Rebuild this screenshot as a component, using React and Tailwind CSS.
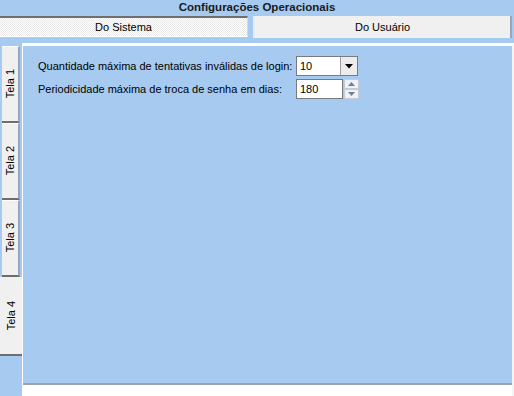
export default function App() {
  const font = { fontFamily: '"Liberation Sans", Arial, sans-serif' };
  return (
    <div
      className="w-[514px] h-[396px] bg-[#a6caf0] text-[11px] text-black flex flex-col overflow-hidden"
      style={font}
    >
      {/* Title */}
      <div className="h-[16px] flex items-center justify-center font-bold text-[11.5px] text-[#1a1a1a]">
        Configurações Operacionais
      </div>

      {/* Top tabs */}
      <div className="h-[23px] flex">
        <div className="w-[248px] h-[21px] border-t-2 border-[#6e6e6e] border-b border-b-white border-r border-r-[#d8d8d8] bg-[#f6f6f6] bg-[repeating-conic-gradient(#ffffff_0_25%,#e9e9e9_0_50%)] bg-[length:2px_2px] flex items-center justify-center">
          Do Sistema
        </div>
        <div className="w-[5px]" />
        <div className="w-[259px] h-[22px] bg-[#f0f0f0] border-l-2 border-l-[#e6ecf4] border-r-2 border-r-[#9aa6b8] flex items-center justify-center">
          Do Usuário
        </div>
      </div>

      {/* Body */}
      <div className="mt-[4px] flex flex-1">
        {/* Left vertical tabs */}
        <div className="w-[22px] flex flex-col pt-[3px]">
          {["Tela 1", "Tela 2", "Tela 3"].map((t) => (
            <div
              key={t}
              className="ml-[2px] w-[18px] h-[77px] bg-[#f0f0f0] border-t border-t-white border-b-2 border-b-[#6e6e6e] border-r-2 border-r-[#9aa6b8] flex items-center justify-center"
            >
              <span className="[writing-mode:vertical-rl] rotate-180 whitespace-nowrap">{t}</span>
            </div>
          ))}
          <div className="w-[22px] h-[79px] bg-[#f0f0f0] border-b-2 border-b-[#6e6e6e] flex items-center justify-center">
            <span className="[writing-mode:vertical-rl] rotate-180 whitespace-nowrap">Tela 4</span>
          </div>
        </div>

        {/* Content */}
        <div className="flex-1 flex flex-col">
          <div className="flex-1 border-t-[3px] border-t-white border-l border-l-white border-r-2 border-r-[#f4f4f4] flex flex-col">
            <div className="flex-1 bg-[#a6caf0] border-b-2 border-b-[#9aa3ad] pl-[15px] pt-[10px] flex flex-col gap-[3px]">
              <div className="flex items-center h-[20px]">
                <span className="w-[258px] whitespace-nowrap">
                  Quantidade máxima de tentativas inválidas de login:
                </span>
                <div className="w-[62px] h-[20px] bg-white border border-[#7a7a7a] flex items-center">
                  <span className="flex-1 pl-[3px]">10</span>
                  <div className="w-[17px] h-[18px] bg-[#ececec] border-l border-[#a0a0a0] flex items-center justify-center">
                    <svg width="8" height="5" viewBox="0 0 8 5">
                      <path d="M0 0 H8 L4 4.5 Z" fill="#000" />
                    </svg>
                  </div>
                </div>
              </div>
              <div className="flex items-center h-[20px]">
                <span className="w-[258px] whitespace-nowrap">
                  Periodicidade máxima de troca de senha em dias:
                </span>
                <div className="w-[47px] h-[20px] bg-white border border-[#7a7a7a] flex items-center pl-[3px]">
                  180
                </div>
                <div className="ml-[1px] w-[15px] h-[20px] flex flex-col">
                  <div className="h-[10px] bg-[#eef1f5] border border-[#c5ccd6] flex items-center justify-center">
                    <svg width="7" height="4" viewBox="0 0 7 4">
                      <path d="M0 4 H7 L3.5 0 Z" fill="#6d7f99" />
                    </svg>
                  </div>
                  <div className="h-[10px] bg-[#eef1f5] border border-[#c5ccd6] flex items-center justify-center">
                    <svg width="7" height="4" viewBox="0 0 7 4">
                      <path d="M0 0 H7 L3.5 4 Z" fill="#6d7f99" />
                    </svg>
                  </div>
                </div>
              </div>
            </div>
            <div className="h-[11px] bg-white" />
          </div>
        </div>
      </div>
    </div>
  );
}
